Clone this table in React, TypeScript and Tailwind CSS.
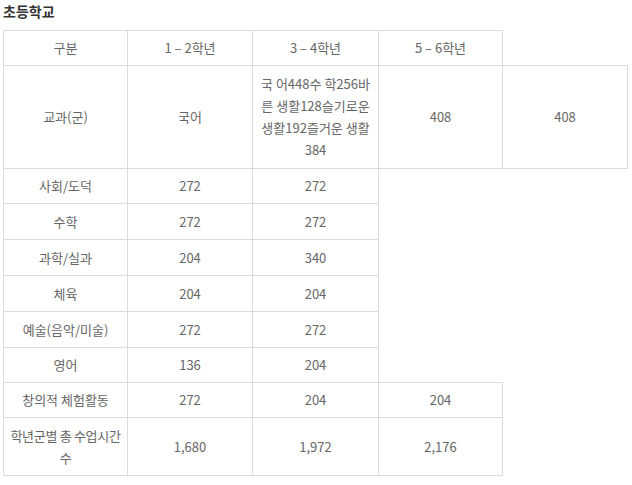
const rows: { cells: React.ReactNode[]; h: string }[] = [
  { cells: ["사회/도덕", "272", "272"], h: "h-[35px]" },
  { cells: ["수학", "272", "272"], h: "h-[36px]" },
  { cells: ["과학/실과", "204", "340"], h: "h-[36px]" },
  { cells: ["체육", "204", "204"], h: "h-[36px]" },
  { cells: ["예술(음악/미술)", "272", "272"], h: "h-[36px]" },
  { cells: ["영어", "136", "204"], h: "h-[35px]" },
  { cells: ["창의적 체험활동", "272", "204", "204"], h: "h-[35px]" },
  {
    cells: [
      <span className="whitespace-nowrap tracking-[-0.3px]">
        학년군별 총 수업시간
        <br />수
      </span>,
      "1,680",
      "1,972",
      "2,176",
    ],
    h: "h-[58px]",
  },
]

function Cell({ children }: { children: React.ReactNode }) {
  return (
    <td className="border border-[#dcdcdc] px-1 py-[6px] text-center align-middle leading-[22px]">
      {children}
    </td>
  )
}

export default function App() {
  return (
    <div
      className="min-h-screen bg-white pl-[3px] pt-[1px] text-[13px] text-[#666]"
      style={{ fontFamily: '"Noto Sans CJK KR", "Noto Sans", sans-serif' }}
    >
      <h3 className="h-[29px] text-[14px] font-bold leading-[20px] text-[#333]">초등학교</h3>
      <table className="w-[624px] table-fixed border-collapse">
        <colgroup>
          <col className="w-[124px]" />
          <col className="w-[125px]" />
          <col className="w-[126px]" />
          <col className="w-[124px]" />
          <col className="w-[125px]" />
        </colgroup>
        <tbody>
          <tr className="h-[35px]">
            <Cell>구분</Cell>
            <Cell>1 – 2학년</Cell>
            <Cell>3 – 4학년</Cell>
            <Cell>5 – 6학년</Cell>
          </tr>
          <tr className="h-[103px]">
            <Cell>교과(군)</Cell>
            <Cell>국어</Cell>
            <Cell>
              국 어448수 학256바
              <br />
              른 생활128슬기로운
              <br />
              생활192즐거운 생활
              <br />
              384
            </Cell>
            <Cell>408</Cell>
            <Cell>408</Cell>
          </tr>
          {rows.map((r, i) => (
            <tr key={i} className={r.h}>
              {r.cells.map((c, j) => (
                <Cell key={j}>{c}</Cell>
              ))}
            </tr>
          ))}
        </tbody>
      </table>
    </div>
  )
}
